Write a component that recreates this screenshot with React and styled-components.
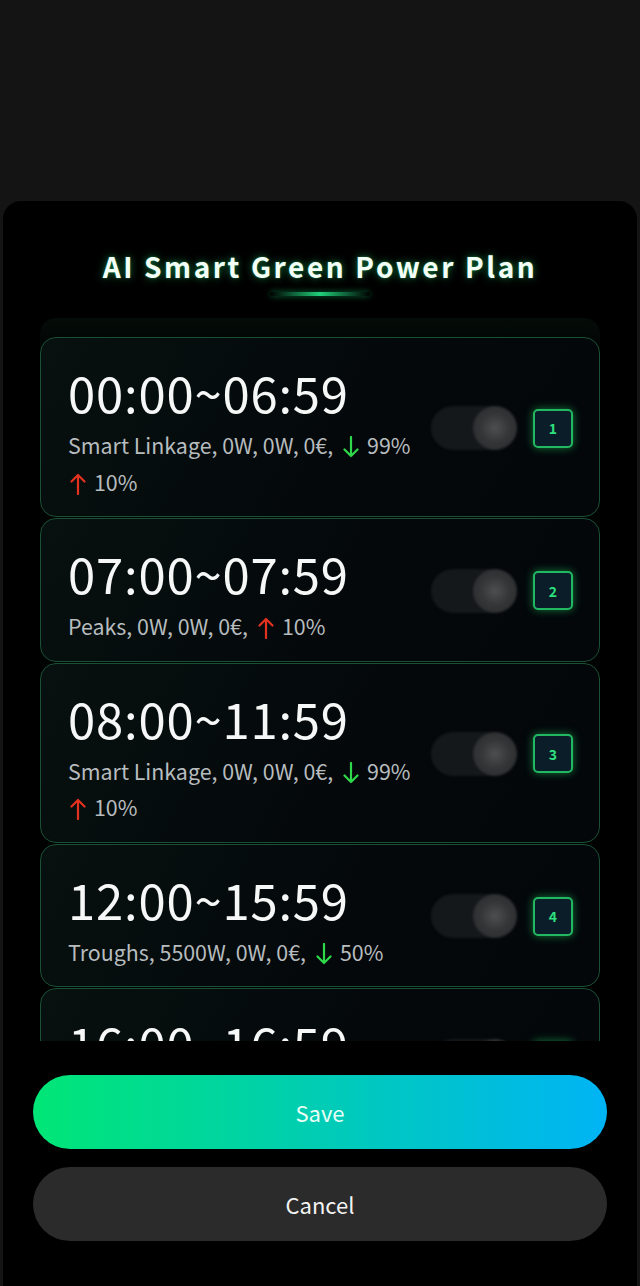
import styled, { createGlobalStyle } from 'styled-components';

const GlobalStyle = createGlobalStyle`
    html, body {
        margin: 0;
        padding: 0;
        background: #141414;
    }
    * {
        box-sizing: border-box;
    }
`;

const periods = [
    { time: '00:00~06:59', mode: 'Smart Linkage', power: '0W', grid: '0W', price: '0€', down: '99%', up: '10%', wrap: true },
    { time: '07:00~07:59', mode: 'Peaks', power: '0W', grid: '0W', price: '0€', up: '10%' },
    { time: '08:00~11:59', mode: 'Smart Linkage', power: '0W', grid: '0W', price: '0€', down: '99%', up: '10%', wrap: true },
    { time: '12:00~15:59', mode: 'Troughs', power: '5500W', grid: '0W', price: '0€', down: '50%' },
    { time: '16:00~16:59', mode: 'Peaks', power: '0W', grid: '0W', price: '0€', up: '10%' },
];

function Arrow ({ dir, first }) {
    const color = dir === 'down' ? '#2fd84a' : '#e3321f';
    return (
        <ArrowIcon $first={first} width="16" height="22" viewBox="0 0 16 22" fill="none">
            {dir === 'down' ? (
                <path d="M8 1 V20 M1.5 13.5 L8 20 L14.5 13.5" stroke={color} strokeWidth="2.2" strokeLinecap="round" strokeLinejoin="round" />
            ) : (
                <path d="M8 21 V2 M1.5 8.5 L8 2 L14.5 8.5" stroke={color} strokeWidth="2.2" strokeLinecap="round" strokeLinejoin="round" />
            )}
        </ArrowIcon>
    );
}

function PeriodCard ({ period, index }) {
    const head = `${period.mode}, ${period.power}, ${period.grid}, ${period.price},`;
    return (
        <Card>
            <Info>
                <TimeText>{period.time}</TimeText>
                <SubText>
                    {head}
                    {period.down && (
                        <>
                            <Arrow dir="down" />{period.down}
                        </>
                    )}
                    {period.wrap && <br />}
                    {period.up && (
                        <>
                            <Arrow dir="up" first={period.wrap} />{period.up}
                        </>
                    )}
                </SubText>
            </Info>
            <Controls>
                <Toggle>
                    <Knob />
                </Toggle>
                <Badge>{index + 1}</Badge>
            </Controls>
        </Card>
    );
}

function App () {
    return (
        <>
            <GlobalStyle />
            <Page>
                <Sheet>
                    <Title>AI Smart Green Power Plan</Title>
                    <TitleBar />
                    <ListContainer>
                        {periods.map((period, index) => (
                            <PeriodCard key={index} period={period} index={index} />
                        ))}
                    </ListContainer>
                    <Actions>
                        <SaveButton>Save</SaveButton>
                        <CancelButton>Cancel</CancelButton>
                    </Actions>
                </Sheet>
            </Page>
        </>
    );
}

const Page = styled.div`
    height: 1286px;
    padding-top: 201px;
    display: flex;
    flex-direction: column;
    font-family: "Noto Sans CJK SC", "Noto Sans", sans-serif;
    overflow: hidden;
`;

const Sheet = styled.div`
    flex: 1;
    margin: 0 3px;
    background: #000;
    border-radius: 18px 18px 0 0;
    display: flex;
    flex-direction: column;
    align-items: center;
    padding-top: 45px;
`;

const Title = styled.h1`
    margin: 0;
    font-size: 28px;
    line-height: 40px;
    font-weight: 700;
    letter-spacing: 2.6px;
    color: #f4fff8;
    text-shadow: 0 0 8px rgba(40, 220, 120, 0.55), 0 0 2px rgba(40, 220, 120, 0.5);
`;

const TitleBar = styled.div`
    width: 100px;
    height: 4px;
    margin-top: 6px;
    border-radius: 2px;
    background: linear-gradient(90deg, rgba(20, 200, 100, 0) 0%, #1fd07a 50%, rgba(20, 200, 100, 0) 100%);
    box-shadow: 0 0 6px rgba(30, 210, 120, 0.5);
`;

const ListContainer = styled.div`
    width: calc(100% - 74px);
    height: 723px;
    margin-top: 22px;
    padding-top: 19px;
    display: flex;
    flex-direction: column;
    gap: 1px;
    overflow: hidden;
    border-radius: 16px 16px 0 0;
    background: linear-gradient(180deg, #040c08 0%, #020504 30px, #000 100%);
`;

const Card = styled.div`
    flex-shrink: 0;
    display: flex;
    align-items: center;
    justify-content: space-between;
    padding: 24px 26px 16px 27px;
    border: 1.5px solid #1a5036;
    border-radius: 16px;
    background: linear-gradient(120deg, #07110f 0%, #04080b 55%, #03070a 100%);
`;

const Info = styled.div`
    display: flex;
    flex-direction: column;
`;

const TimeText = styled.div`
    font-size: 49px;
    line-height: 60px;
    font-weight: 400;
    letter-spacing: 0.8px;
    color: #f6f8f7;
    margin-bottom: 5px;
`;

const SubText = styled.div`
    font-size: 21.4px;
    line-height: 36.5px;
    color: #b7bcbf;
    white-space: nowrap;
`;

const ArrowIcon = styled.svg`
    display: inline-block;
    vertical-align: -4px;
    margin: 0 8px 0 ${({ $first }) => ($first ? '2px' : '10px')};
`;

const Controls = styled.div`
    display: flex;
    align-items: center;
    gap: 16px;
    margin-top: -6px;
`;

const Toggle = styled.div`
    width: 86px;
    height: 44px;
    border-radius: 22px;
    background: #14181b;
    display: flex;
    justify-content: flex-end;
    align-items: center;
    filter: blur(0.8px);
`;

const Knob = styled.div`
    width: 44px;
    height: 44px;
    border-radius: 50%;
    background: radial-gradient(circle at 50% 50%, #4e4f50 0%, #343637 45%, #25282a 100%);
`;

const Badge = styled.div`
    width: 40px;
    height: 39px;
    border-radius: 5px;
    border: 2px solid #22b862;
    background: #0a1d28;
    box-shadow: 0 0 8px rgba(34, 210, 100, 0.55);
    display: flex;
    align-items: center;
    justify-content: center;
    font-size: 14px;
    font-weight: 700;
    color: #2ee07e;
`;

const Actions = styled.div`
    width: 100%;
    padding: 34px 30px 0;
    display: flex;
    flex-direction: column;
    gap: 18px;
`;

const BaseButton = styled.button`
    height: 74px;
    width: 100%;
    border: none;
    border-radius: 37px;
    font-family: "Noto Sans CJK SC", "Noto Sans", sans-serif;
    font-size: 22px;
    line-height: 30px;
    font-weight: 400;
    cursor: pointer;
`;

const SaveButton = styled(BaseButton)`
    background: linear-gradient(90deg, #00e676 0%, #00cfae 45%, #00b4f5 100%);
    color: #e8fff6;
`;

const CancelButton = styled(BaseButton)`
    background: #2b2b2b;
    color: #f4f4f4;
`;

export default App;
